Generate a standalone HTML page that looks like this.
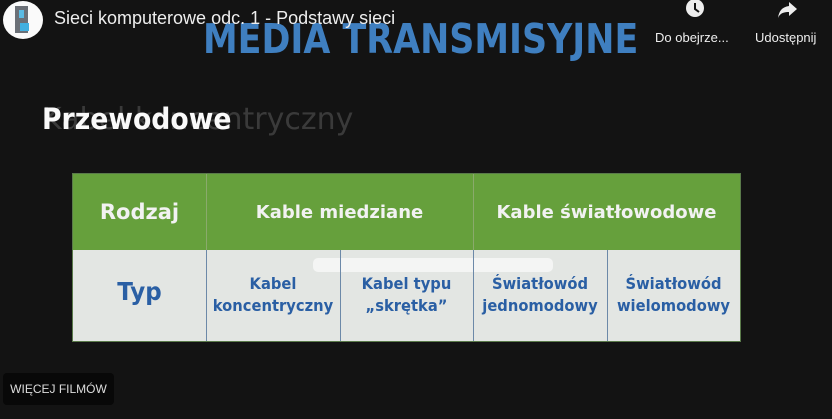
<!DOCTYPE html>
<html><head><meta charset="utf-8"><style>
*{margin:0;padding:0;box-sizing:border-box}
body{width:832px;height:419px;background:#131313;position:relative;overflow:hidden;font-family:"Liberation Sans","DejaVu Sans",sans-serif}
.abs{position:absolute}
.title{left:54px;top:8px;color:#eee;font-size:18px;white-space:nowrap}
.media{left:203px;top:15px;color:#3f7fc0;font-family:"DejaVu Sans",sans-serif;font-size:41px;font-weight:bold;white-space:nowrap;transform:scaleX(0.85);transform-origin:left}
.ghost{left:42px;top:102px;font-family:"DejaVu Sans",sans-serif;font-size:30px;color:#3a3a3a;white-space:nowrap}
.prz{left:42px;top:102px;font-family:"DejaVu Sans",sans-serif;font-size:29px;color:#fafafa;font-weight:bold;white-space:nowrap;transform:scaleX(0.92);transform-origin:left}
.tbl{left:72px;top:173px;width:669px;height:169px;background:#e3e6e3;border:1px solid #5a7a4a}
.hdr{left:0;top:0;width:667px;height:76px;background:#66a03c}
.vl{position:absolute;width:1px;background:#6c89a8}
.cell{position:absolute;text-align:center;font-family:"DejaVu Sans",sans-serif;font-weight:bold}
.h{color:#f2f2f2;font-size:18px;top:28px}
.b{color:#2a5fa4;font-size:16px;line-height:22px;top:99px;transform:scaleX(0.92)}
.btn{left:3px;top:373px;width:111px;height:32px;background:#080808;border-radius:4px;color:#ddd;font-size:12px;text-align:center;line-height:32px}
.ic{color:#eee;font-size:13px;white-space:nowrap}
</style></head><body>
<div class="abs" style="left:3px;top:1px;width:40px;height:38px;border-radius:50%;background:#fafafa"></div>
<div class="abs" style="left:15px;top:6px;width:13px;height:27px;background:#6b7077"></div>
<div class="abs" style="left:19px;top:10px;width:5px;height:8px;background:#5bbbe3"></div>
<div class="abs" style="left:20px;top:23px;width:9px;height:8px;background:#42b0e0"></div>
<div class="abs ghost">Kabel koncentryczny</div>
<div class="abs media">MEDIA TRANSMISYJNE</div>
<div class="abs title">Sieci komputerowe odc. 1 - Podstawy sieci</div>
<div class="abs prz">Przewodowe</div>
<svg class="abs" style="left:684px;top:0" width="22" height="19" viewBox="0 0 22 19"><circle cx="11" cy="8" r="9" fill="#eee"/><path d="M11 3v6l4 3" stroke="#131313" stroke-width="2" fill="none"/></svg>
<div class="abs ic" style="left:655px;top:30px">Do obejrze...</div>
<svg class="abs" style="left:777px;top:1px" width="22" height="18" viewBox="0 0 22 18"><path d="M12 1l8 7-8 7v-4C7 11 3 12 1 17 2 10 5 6 12 5z" fill="#eee"/></svg>
<div class="abs ic" style="left:755px;top:30px">Udostępnij</div>
<div class="abs tbl">
 <div class="abs hdr"></div>
 <div class="abs" style="left:240px;top:84px;width:240px;height:14px;background:rgba(255,255,255,.6);border-radius:5px"></div>
 <div class="vl" style="left:133px;top:0;height:167px;background:#8aaa6c"></div>
 <div class="vl" style="left:400px;top:0;height:167px;background:#8aaa6c"></div>
 <div class="vl" style="left:133px;top:76px;height:91px"></div>
 <div class="vl" style="left:267px;top:76px;height:91px"></div>
 <div class="vl" style="left:400px;top:76px;height:91px"></div>
 <div class="vl" style="left:534px;top:76px;height:91px"></div>
 <div class="cell h" style="left:0;width:133px;font-size:21px;top:26px">Rodzaj</div>
 <div class="cell h" style="left:133px;width:267px;font-size:18px">Kable miedziane</div>
 <div class="cell h" style="left:400px;width:267px;font-size:18px">Kable światłowodowe</div>
 <div class="cell b" style="left:0;width:133px;font-size:25px;top:107px">Typ</div>
 <div class="cell b" style="left:133px;width:134px">Kabel<br>koncentryczny</div>
 <div class="cell b" style="left:267px;width:133px">Kabel typu<br>„skrętka”</div>
 <div class="cell b" style="left:400px;width:134px">Światłowód<br>jednomodowy</div>
 <div class="cell b" style="left:534px;width:133px">Światłowód<br>wielomodowy</div>
</div>
<div class="abs btn">WIĘCEJ FILMÓW</div>
</body></html>
